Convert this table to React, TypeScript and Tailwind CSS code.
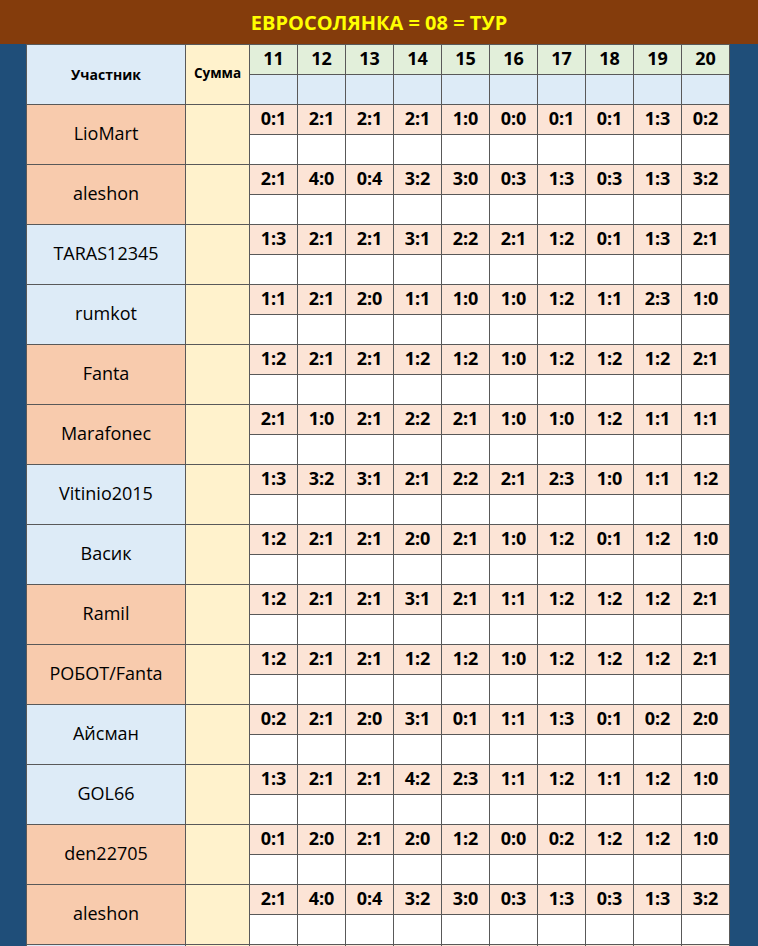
const ROUNDS = [11, 12, 13, 14, 15, 16, 17, 18, 19, 20];

type Player = { name: string; tone: "orange" | "blue"; scores: string[] };

const PLAYERS: Player[] = [
  { name: "LioMart", tone: "orange", scores: "0:1 2:1 2:1 2:1 1:0 0:0 0:1 0:1 1:3 0:2".split(" ") },
  { name: "aleshon", tone: "orange", scores: "2:1 4:0 0:4 3:2 3:0 0:3 1:3 0:3 1:3 3:2".split(" ") },
  { name: "TARAS12345", tone: "blue", scores: "1:3 2:1 2:1 3:1 2:2 2:1 1:2 0:1 1:3 2:1".split(" ") },
  { name: "rumkot", tone: "blue", scores: "1:1 2:1 2:0 1:1 1:0 1:0 1:2 1:1 2:3 1:0".split(" ") },
  { name: "Fanta", tone: "orange", scores: "1:2 2:1 2:1 1:2 1:2 1:0 1:2 1:2 1:2 2:1".split(" ") },
  { name: "Marafonec", tone: "orange", scores: "2:1 1:0 2:1 2:2 2:1 1:0 1:0 1:2 1:1 1:1".split(" ") },
  { name: "Vitinio2015", tone: "blue", scores: "1:3 3:2 3:1 2:1 2:2 2:1 2:3 1:0 1:1 1:2".split(" ") },
  { name: "Васик", tone: "blue", scores: "1:2 2:1 2:1 2:0 2:1 1:0 1:2 0:1 1:2 1:0".split(" ") },
  { name: "Ramil", tone: "orange", scores: "1:2 2:1 2:1 3:1 2:1 1:1 1:2 1:2 1:2 2:1".split(" ") },
  { name: "РОБОТ/Fanta", tone: "orange", scores: "1:2 2:1 2:1 1:2 1:2 1:0 1:2 1:2 1:2 2:1".split(" ") },
  { name: "Айсман", tone: "blue", scores: "0:2 2:1 2:0 3:1 0:1 1:1 1:3 0:1 0:2 2:0".split(" ") },
  { name: "GOL66", tone: "blue", scores: "1:3 2:1 2:1 4:2 2:3 1:1 1:2 1:1 1:2 1:0".split(" ") },
  { name: "den22705", tone: "orange", scores: "0:1 2:0 2:1 2:0 1:2 0:0 0:2 1:2 1:2 1:0".split(" ") },
  { name: "aleshon", tone: "orange", scores: "2:1 4:0 0:4 3:2 3:0 0:3 1:3 0:3 1:3 3:2".split(" ") },
  { name: "", tone: "blue", scores: Array(10).fill("") },
];

const cell = "border-r border-b border-[#595959] flex items-center justify-center";

export default function App() {
  return (
    <div className="w-[758px] h-[946px] overflow-hidden bg-[#1f4e79] font-['Open_Sans','Noto_Sans',sans-serif] text-black">
      <div className="h-[44px] bg-[#843c0c] flex items-center justify-center">
        <h1 className="text-[20px] font-bold text-[#ffff00] mt-px">ЕВРОСОЛЯНКА = 08 = ТУР</h1>
      </div>

      <div className="flex">
        <div className="w-[26px] shrink-0" />
        <div className="grid grid-cols-[159px_64px_repeat(10,48px)] auto-rows-[30px] border-l border-t border-[#595959] w-[704px]">
          <div className={`${cell} row-span-2 bg-[#ddebf7] text-[14px] font-bold`}>Участник</div>
          <div className={`${cell} row-span-2 bg-[#fff2cc] text-[13.5px] font-bold pb-[2px]`}>Сумма</div>
          {ROUNDS.map((r) => (
            <div key={r} className={`${cell} bg-[#e2efda] text-[18px] font-bold pb-[2px]`}>
              {r}
            </div>
          ))}
          {ROUNDS.map((r) => (
            <div key={`b${r}`} className={`${cell} bg-[#ddebf7]`} />
          ))}

          {PLAYERS.map((p, i) => (
            <PlayerRows key={i} player={p} />
          ))}
        </div>
        <div className="flex-1" />
      </div>
    </div>
  );
}

function PlayerRows({ player }: { player: Player }) {
  const bg = player.tone === "orange" ? "bg-[#f8cbad]" : "bg-[#ddebf7]";
  return (
    <>
      <div className={`${cell} row-span-2 ${bg} text-[18px] pb-[2px]`}>{player.name}</div>
      <div className={`${cell} row-span-2 bg-[#fff2cc]`} />
      {player.scores.map((s, i) => (
        <div key={i} className={`${cell} bg-[#fce4d6] text-[18px] font-bold pb-[2px]`}>
          {s}
        </div>
      ))}
      {player.scores.map((_, i) => (
        <div key={`e${i}`} className={`${cell} bg-white`} />
      ))}
    </>
  );
}
